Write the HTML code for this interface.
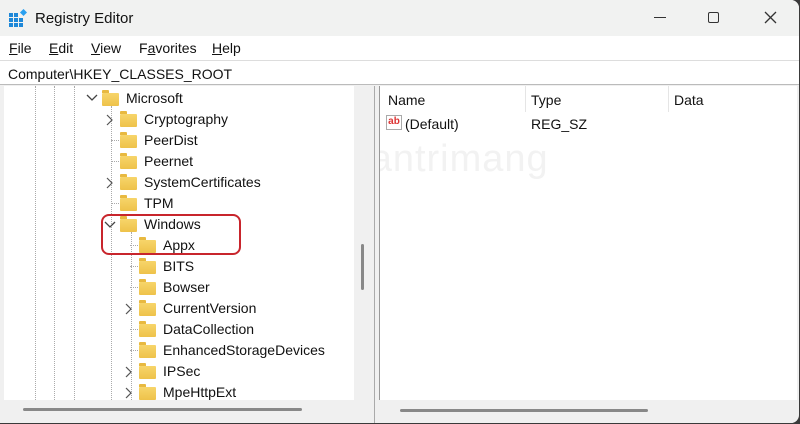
<!DOCTYPE html>
<html><head><style>
*{margin:0;padding:0;box-sizing:border-box}
body{width:800px;height:424px;background:#3a3a3a;font-family:"Liberation Sans",sans-serif;overflow:hidden;position:relative}
.win{position:absolute;left:0;top:0;width:799px;height:423px;background:#f0f0f0;border-radius:0 8px 8px 0;overflow:hidden}
.title{position:absolute;left:0;top:0;right:0;height:36px;background:#f1f2f1}
.menu{position:absolute;left:0;top:36px;right:0;height:24px;background:#fff;font-size:14px;color:#111}
.menu span{position:absolute;top:4px}
.addr{position:absolute;left:0;top:60px;right:0;height:25px;background:#fff;border-top:1px solid #ddd;border-bottom:1px solid #bbb;font-size:14px;color:#111;padding:5px 0 0 8px}
.tree{position:absolute;left:4px;top:86px;width:350px;height:314px;background:#fff}
.vs{position:absolute;left:354px;top:86px;width:18px;height:314px;background:#f0f0f0}
.right{position:absolute;left:379px;top:86px;width:418px;height:314px;background:#fff;border-left:1px solid #999;overflow:hidden}
.t{position:absolute;font-size:14px;color:#111;white-space:nowrap}
.f{position:absolute;width:17px;height:13px;background:linear-gradient(#f7d56a,#eec24a);border-radius:1px}
.f:before{content:"";position:absolute;left:0;top:-3px;width:7px;height:3px;background:#e8b940;border-radius:1px 1px 0 0}
.dl{position:absolute;border-left:1px dotted #aaa}
.dh{position:absolute;border-top:1px dotted #aaa;width:8px}
</style></head><body>
<div class="win">
<div class="title">
<svg style="position:absolute;left:9px;top:9px" width="18" height="18" viewBox="0 0 18 18"><g fill="#1e88d8"><rect x="0" y="4" width="4" height="4"/><rect x="5" y="4" width="4" height="4"/><rect x="0" y="9" width="4" height="4"/><rect x="5" y="9" width="4" height="4"/><rect x="10" y="9" width="4" height="4"/><rect x="0" y="14" width="4" height="4"/><rect x="5" y="14" width="4" height="4"/><rect x="10" y="14" width="4" height="4"/></g><rect x="12" y="1" width="5" height="5" fill="#2aa0f0" transform="rotate(45 14.5 3.5)"/></svg>
<div class="t" style="left:35px;top:10px;font-size:15px">Registry Editor</div>
<div style="position:absolute;left:654px;top:17px;width:12px;height:1px;background:#333"></div>
<div style="position:absolute;left:708px;top:12px;width:11px;height:11px;border:1.3px solid #333;border-radius:2px"></div>
<svg style="position:absolute;left:764px;top:11px" width="13" height="13"><path d="M1 1L12 12M12 1L1 12" stroke="#333" stroke-width="1.3"/></svg>
</div>
<div class="menu"><span style="left:9px"><u>F</u>ile</span><span style="left:49px"><u>E</u>dit</span><span style="left:91px"><u>V</u>iew</span><span style="left:139px">F<u>a</u>vorites</span><span style="left:212px"><u>H</u>elp</span></div>
<div class="addr">Computer\HKEY_CLASSES_ROOT</div>
<div class="tree">
<div class="dl" style="left:31px;top:0;height:314px"></div>
<div class="dl" style="left:50px;top:0;height:314px"></div>
<div class="dl" style="left:70px;top:0;height:314px"></div>
<div class="dl" style="left:107px;top:20px;height:294px"></div>
<div class="dl" style="left:127px;top:146px;height:168px"></div>
<svg style="position:absolute;left:82px;top:8px" width="12" height="8"><path d="M1 1L6 6L11 1" stroke="#444" fill="none" stroke-width="1.3"/></svg>
<div class="f" style="left:98px;top:7px"></div><div class="t" style="left:122px;top:4px">Microsoft</div>
</div>
<div class="vs"><div style="position:absolute;left:7px;top:158px;width:3px;height:46px;background:#888;border-radius:2px"></div></div>
<div style="position:absolute;left:374px;top:86px;width:1px;height:337px;background:#aaa"></div>
<div class="right">
<div class="t" style="left:8px;top:6px">Name</div>
<div style="position:absolute;left:145px;top:0;height:26px;border-left:1px solid #e5e5e5"></div>
<div class="t" style="left:151px;top:6px">Type</div>
<div style="position:absolute;left:288px;top:0;height:26px;border-left:1px solid #e5e5e5"></div>
<div class="t" style="left:294px;top:6px">Data</div>
<div style="position:absolute;left:6px;top:29px;width:16px;height:15px;border:1px solid #aaa;background:#fff;font-size:10px;font-weight:bold;color:#d33;line-height:11px;text-align:center">ab</div>
<div class="t" style="left:25px;top:30px">(Default)</div>
<div class="t" style="left:151px;top:30px">REG_SZ</div>
<div class="t" style="left:-62px;top:52px;font-size:38px;color:#f2f2f2;letter-spacing:1px">Quantrimang</div>
</div>
<div style="position:absolute;left:0;top:400px;width:372px;height:23px;background:#f0f0f0"><div style="position:absolute;left:23px;top:8px;width:279px;height:3px;background:#888;border-radius:2px"></div></div>
<div style="position:absolute;left:379px;top:400px;width:418px;height:23px;background:#f0f0f0"><div style="position:absolute;left:21px;top:9px;width:248px;height:3px;background:#888;border-radius:2px"></div></div>
</div>
<div id="rows"></div>
<script>
var rows=[["Cryptography",119,1,1],["PeerDist",140,1,0],["Peernet",161,1,0],["SystemCertificates",182,1,1],["TPM",203,1,0],["Windows",224,1,2],["Appx",245,2,0],["BITS",266,2,0],["Bowser",287,2,0],["CurrentVersion",308,2,1],["DataCollection",329,2,0],["EnhancedStorageDevices",350,2,0],["IPSec",371,2,1],["MpeHttpExt",392,2,1]];
var h="";rows.forEach(function(r){var fx=r[2]==1?120:139,y=r[1];
h+='<div class="f" style="left:'+fx+'px;top:'+(y-5)+'px"></div><div class="t" style="left:'+(fx+24)+'px;top:'+(y-8)+'px">'+r[0]+'</div>';
if(r[3]==1)h+='<svg style="position:absolute;left:'+(fx-14)+'px;top:'+(y-5)+'px" width="8" height="12"><path d="M1 1L6 6L1 11" stroke="#555" fill="none" stroke-width="1.2"/></svg>';
else if(r[3]==2)h+='<svg style="position:absolute;left:'+(fx-16)+'px;top:'+(y-3)+'px" width="12" height="8"><path d="M1 1L6 6L11 1" stroke="#444" fill="none" stroke-width="1.3"/></svg>';
else h+='<div class="dh" style="left:'+(fx-9)+'px;top:'+y+'px"></div>';});
h+='<div style="position:absolute;left:101px;top:214px;width:140px;height:41px;border:2px solid #c8252c;border-radius:8px"></div>';
document.getElementById("rows").innerHTML=h;
</script>
</body></html>
